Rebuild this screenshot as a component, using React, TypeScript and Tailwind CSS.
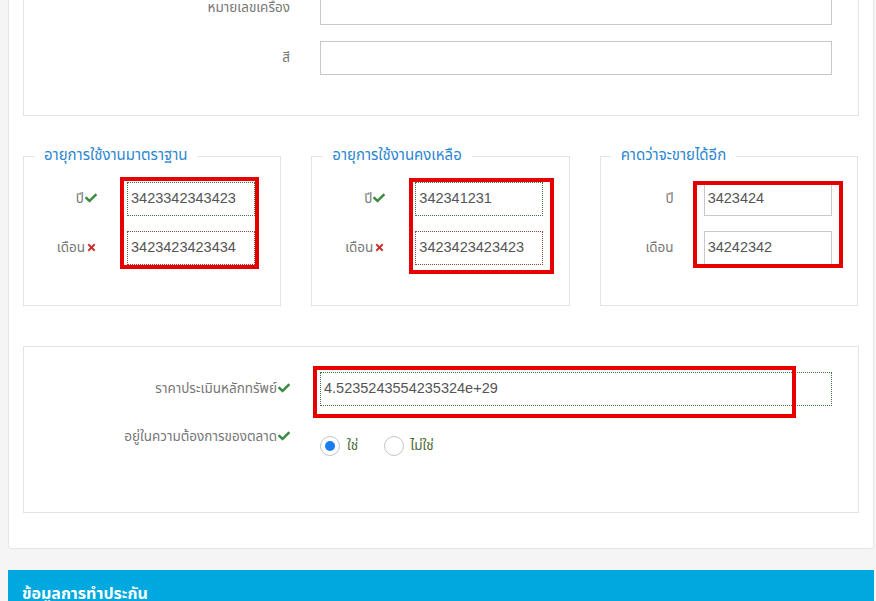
import React from "react";
import { FaCheck, FaTimes } from "react-icons/fa";

const font = { fontFamily: '"Noto Sans Thai", "Noto Sans", "Liberation Sans", sans-serif' };

type Status = "ok" | "err" | "none";

function Mark({ s }: { s: Status }) {
  if (s === "ok") return <FaCheck className="inline-block text-[#3c8a3f] w-[12px] h-[12px] ml-[1px] align-[-1px]" />;
  if (s === "err") return <FaTimes className="inline-block text-[#c9302c] w-[11px] h-[11px] ml-[1px] align-[-1px]" />;
  return null;
}

function Input({ value, s }: { value: string; s: Status }) {
  const cls =
    s === "ok"
      ? "border border-dotted border-[#3c763d]"
      : s === "err"
      ? "border border-dotted border-[#8b4a3c]"
      : "border border-solid border-[#c8c8c8]";
  return (
    <div className={`h-[34px] w-full bg-white flex items-center pl-[3px] text-[14.5px] text-[#555] ${cls}`} style={{ fontFamily: '"Liberation Sans", Arial, sans-serif' }}>
      {value}
    </div>
  );
}

function FsRow({ label, s, value, is }: { label: string; s: Status; value: string; is: Status }) {
  return (
    <div className="flex items-center">
      <div className="w-[63px] text-right text-[13.5px] text-[#777] whitespace-nowrap">
        {label}
        <Mark s={s} />
      </div>
      <div className="ml-[30px] w-[128px]">
        <Input value={value} s={is} />
      </div>
    </div>
  );
}

function Fs({ title, rows }: { title: string; rows: { label: string; s: Status; value: string; is: Status }[] }) {
  return (
    <fieldset className="border border-[#e3e3e3] px-[10px] pb-[40px] min-w-0">
      <legend className="px-[10px] text-[15px] leading-[20px] text-[#2b86d1] whitespace-nowrap">{title}</legend>
      <div className="mt-[16px] flex flex-col gap-[15px]">
        {rows.map((r, i) => (
          <FsRow key={i} {...r} />
        ))}
      </div>
    </fieldset>
  );
}

function Red({ cls }: { cls: string }) {
  return <div className={`absolute border-[4px] border-[#e60000] pointer-events-none ${cls}`} />;
}

export default function App() {
  return (
    <div className="relative w-[876px] h-[601px] overflow-hidden bg-[#f5f5f5]" style={font}>
      <div className="ml-[8px] w-[866px] -mt-[51px] bg-white border border-[#e6e6e6] rounded-b-[3px] px-[14px] pt-[15px] pb-[35px]">
        {/* box 1 */}
        <div className="border border-[#e3e3e3] pt-[25px] pb-[40px] pr-[26px] flex flex-col gap-[16px]">
          <div className="flex items-center">
            <div className="w-[266px] text-right text-[13.5px] text-[#777]">หมายเลขเครื่อง</div>
            <div className="ml-[30px] flex-1">
              <Input value="" s="none" />
            </div>
          </div>
          <div className="flex items-center">
            <div className="w-[266px] text-right text-[13.5px] text-[#777]">สี</div>
            <div className="ml-[30px] flex-1">
              <Input value="" s="none" />
            </div>
          </div>
        </div>

        {/* fieldsets */}
        <div className="mt-[30px] grid grid-cols-3 gap-[30px] pr-[1px]">
          <Fs
            title="อายุการใช้งานมาตราฐาน"
            rows={[
              { label: "ปี", s: "ok", value: "3423342343423", is: "ok" },
              { label: "เดือน", s: "err", value: "3423423423434", is: "err" },
            ]}
          />
          <Fs
            title="อายุการใช้งานคงเหลือ"
            rows={[
              { label: "ปี", s: "ok", value: "342341231", is: "ok" },
              { label: "เดือน", s: "err", value: "3423423423423", is: "err" },
            ]}
          />
          <Fs
            title="คาดว่าจะขายได้อีก"
            rows={[
              { label: "ปี", s: "none", value: "3423424", is: "none" },
              { label: "เดือน", s: "none", value: "34242342", is: "none" },
            ]}
          />
        </div>

        {/* box 3 */}
        <div className="mt-[40px] border border-[#e3e3e3] pt-[25px] pb-[57px] pr-[26px] flex flex-col gap-[15px]">
          <div className="flex items-center">
            <div className="w-[266px] text-right text-[13.5px] text-[#777] whitespace-nowrap">
              ราคาประเมินหลักทรัพย์
              <Mark s="ok" />
            </div>
            <div className="ml-[30px] flex-1">
              <Input value="4.5235243554235324e+29" s="ok" />
            </div>
          </div>
          <div className="flex items-start h-[34px]">
            <div className="w-[266px] text-right text-[13.5px] text-[#777] whitespace-nowrap pt-[6px]">
              อยู่ในความต้องการของตลาด
              <Mark s="ok" />
            </div>
            <div className="ml-[30px] flex-1 flex items-center pt-[15px]">
              <div className="flex items-center">
                <span className="w-[20px] h-[20px] rounded-full border border-[#c4c4c4] flex items-center justify-center">
                  <span className="w-[10px] h-[10px] rounded-full bg-[#1a7ef0]" />
                </span>
                <span className="ml-[7px] text-[13.5px] text-[#4a6a35]">ใช่</span>
              </div>
              <div className="flex items-center ml-[26px]">
                <span className="w-[20px] h-[20px] rounded-full border border-[#c4c4c4]" />
                <span className="ml-[6px] text-[13.5px] text-[#4a6a35]">ไม่ใช่</span>
              </div>
            </div>
          </div>
        </div>
      </div>

      {/* blue bar */}
      <div className="ml-[8px] w-[866px] mt-[21px] h-[60px] bg-[#00a8e0] px-[14px] pt-[12px]">
        <span className="text-white text-[16px] font-bold">ข้อมูลการทำประกัน</span>
      </div>

      {/* annotations */}
      <Red cls="left-[120px] top-[177px] w-[139px] h-[92px]" />
      <Red cls="left-[409px] top-[178px] w-[145px] h-[96px]" />
      <Red cls="left-[693px] top-[181px] w-[150px] h-[87px]" />
      <Red cls="left-[313px] top-[366px] w-[483px] h-[52px]" />
    </div>
  );
}
